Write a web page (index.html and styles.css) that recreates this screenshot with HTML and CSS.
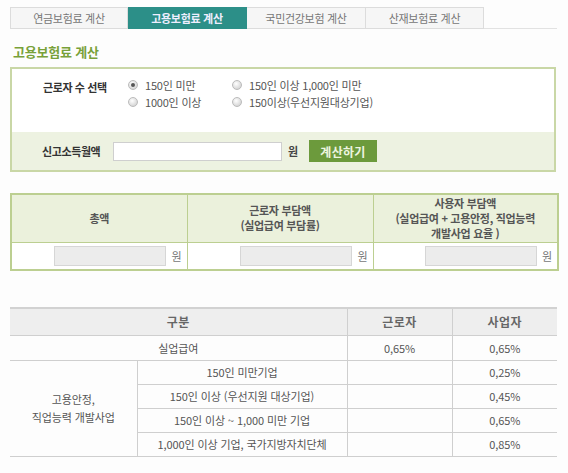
FILE: index.html
```html
<!DOCTYPE html>
<html lang="ko">
<head>
<meta charset="utf-8">
<title>고용보험료 계산</title>
<link rel="stylesheet" href="styles.css">
</head>
<body>
<div class="page">
  <ul class="tabs">
    <li class="tab">연금보험료 계산</li>
    <li class="tab active">고용보험료 계산</li>
    <li class="tab">국민건강보험 계산</li>
    <li class="tab">산재보험료 계산</li>
  </ul>

  <h2 class="title">고용보험료 계산</h2>

  <div class="calc">
    <div class="calc-top">
      <div class="calc-label">근로자 수 선택</div>
      <div class="radios">
        <label class="radio"><span class="dot checked"></span>150인 미만</label>
        <label class="radio"><span class="dot"></span>150인 이상 1,000인 미만</label>
        <label class="radio"><span class="dot"></span>1000인 이상</label>
        <label class="radio"><span class="dot"></span>150이상(우선지원대상기업)</label>
      </div>
    </div>
    <div class="calc-band">
      <span class="band-label">신고소득월액</span>
      <span class="field"></span>
      <span class="unit">원</span>
      <button class="btn" type="button">계산하기</button>
    </div>
  </div>

  <table class="result">
    <colgroup>
      <col class="c1"><col class="c2"><col class="c3">
    </colgroup>
    <thead>
      <tr>
        <th>총액</th>
        <th>근로자 부담액<br>(실업급여 부담률)</th>
        <th>사용자 부담액<br>(실업급여 + 고용안정, 직업능력<br>개발사업 요율 )</th>
      </tr>
    </thead>
    <tbody>
      <tr>
        <td><span class="out"></span><span class="won">원</span></td>
        <td><span class="out"></span><span class="won">원</span></td>
        <td><span class="out"></span><span class="won">원</span></td>
      </tr>
    </tbody>
  </table>

  <table class="rates">
    <colgroup>
      <col class="r1"><col class="r2"><col class="r3"><col class="r4">
    </colgroup>
    <thead>
      <tr>
        <th colspan="2">구분</th>
        <th class="vline">근로자</th>
        <th class="vline">사업자</th>
      </tr>
    </thead>
    <tbody>
      <tr class="tall">
        <td colspan="2">실업급여</td>
        <td class="vline">0,65%</td>
        <td class="vline">0,65%</td>
      </tr>
      <tr>
        <td rowspan="4" class="group">고용안정,<br>직업능력 개발사업</td>
        <td class="vline">150인 미만기업</td>
        <td class="vline"></td>
        <td class="vline">0,25%</td>
      </tr>
      <tr>
        <td class="vline">150인 이상 (우선지원 대상기업)</td>
        <td class="vline"></td>
        <td class="vline">0,45%</td>
      </tr>
      <tr>
        <td class="vline">150인 이상 ~ 1,000 미만 기업</td>
        <td class="vline"></td>
        <td class="vline">0,65%</td>
      </tr>
      <tr>
        <td class="vline">1,000인 이상 기업, 국가지방자치단체</td>
        <td class="vline"></td>
        <td class="vline">0,85%</td>
      </tr>
    </tbody>
  </table>
</div>
</body>
</html>
```

FILE: styles.css
```css
* { box-sizing: border-box; }

html, body {
  margin: 0;
  padding: 0;
  background: #fdfdfd;
}

body {
  font-family: "Noto Sans CJK KR", "Noto Sans", sans-serif;
  font-size: 11px;
  color: #555;
}

.page {
  width: 557px;
  padding-left: 10px;
  padding-top: 7px;
}

/* tabs */
.tabs {
  list-style: none;
  margin: 0;
  padding: 0;
  display: flex;
  height: 22px;
  border-bottom: 1px solid #e2e2e2;
}

.tab {
  height: 22px;
  line-height: 20px;
  text-align: center;
  background: #f6f6f6;
  border: 1px solid #dcdcdc;
  border-left: none;
  color: #777;
  font-size: 11px;
  letter-spacing: -0.3px;
}
.tab:nth-child(1) { width: 118px; border-left: 1px solid #dcdcdc; }
.tab:nth-child(2) { width: 119px; }
.tab:nth-child(3) { width: 119px; }
.tab:nth-child(4) { width: 118px; }

.tab.active {
  background: #2c8f88;
  border-color: #2c8f88;
  color: #eef;
  font-weight: bold;
}

/* title */
.title {
  margin: 13px 0 6px 3px;
  font-size: 13px;
  line-height: 19px;
  font-weight: bold;
  color: #78a139;
  letter-spacing: -0.2px;
}

/* calculator box */
.calc {
  width: 546px;
  border: 2px solid #c9d7a6;
  background: #fff;
}

.calc-top {
  height: 63px;
  display: flex;
  padding: 7px 0 0 31px;
}

.calc-label {
  width: 85px;
  padding-top: 3px;
  font-weight: bold;
  color: #333;
  line-height: 17px;
  letter-spacing: -0.4px;
}

.radios {
  display: grid;
  grid-template-columns: 104px auto;
  grid-auto-rows: 17px;
}

.radio {
  display: flex;
  align-items: center;
  gap: 7px;
  color: #555;
  font-size: 11px;
  letter-spacing: -0.2px;
}

.dot {
  width: 10px;
  height: 10px;
  border-radius: 50%;
  border: 1px solid #bbb;
  background: radial-gradient(circle at 40% 35%, #fff 0, #e6e6e6 45%, #c9c9c9 100%);
  position: relative;
  flex: none;
}
.dot.checked::after {
  content: "";
  position: absolute;
  left: 2px;
  top: 2px;
  width: 4px;
  height: 4px;
  border-radius: 50%;
  background: #555;
}

.calc-band {
  height: 38px;
  background: #edf2e1;
  display: flex;
  align-items: center;
  padding-left: 30px;
}

.band-label {
  width: 71px;
  font-weight: bold;
  color: #333;
  letter-spacing: -0.4px;
}

.field {
  width: 169px;
  height: 19px;
  background: #fff;
  border: 1px solid #cfcfcf;
}

.unit {
  margin-left: 6px;
  width: 21px;
  color: #444;
  font-weight: bold;
}

.btn {
  width: 68px;
  height: 22px;
  padding: 0;
  border: none;
  background: #6c9a3c;
  color: #eef5e0;
  font-family: inherit;
  font-size: 12px;
  font-weight: bold;
  letter-spacing: 0.3px;
}

/* result table */
.result {
  margin-top: 21px;
  width: 547px;
  border-collapse: collapse;
  border: 2px solid #bccf91;
  table-layout: fixed;
}
.result .c1 { width: 176px; }
.result .c2 { width: 186px; }
.result .c3 { width: 185px; }

.result th {
  height: 48px;
  background: #ebf1dc;
  border: 1px solid #bccf91;
  font-size: 11px;
  line-height: 15px;
  font-weight: bold;
  color: #555;
  padding: 0;
  letter-spacing: -0.3px;
}

.result td {
  height: 28px;
  border: 1px solid #bccf91;
  background: #fff;
  text-align: right;
  padding: 0 5px 0 0;
}

.result td .out {
  display: inline-block;
  vertical-align: middle;
  width: 112px;
  height: 20px;
  background: #ececec;
  border: 1px solid #d6d6d6;
}
.result td .won {
  display: inline-block;
  vertical-align: middle;
  margin-left: 5px;
  color: #777;
}

/* rates table */
.rates {
  margin-top: 36px;
  width: 547px;
  border-collapse: collapse;
  table-layout: fixed;
  border-top: 2px solid #d2d2d2;
  border-bottom: 1px solid #cfcfcf;
}
.rates .r1 { width: 127px; }
.rates .r2 { width: 210px; }
.rates .r3 { width: 105px; }
.rates .r4 { width: 105px; }

.rates th {
  height: 27px;
  background: #eeeeee;
  font-size: 12px;
  font-weight: bold;
  color: #666;
  border-bottom: 1px solid #cfcfcf;
  padding: 0;
  letter-spacing: 0.5px;
}

.rates td {
  height: 24px;
  text-align: center;
  color: #555;
  font-size: 11px;
  border-bottom: 1px solid #cfcfcf;
  padding: 0;
  letter-spacing: -0.1px;
}

.rates tr.tall td { height: 25px; }

.rates .vline { border-left: 1px solid #cfcfcf; }

.rates td.group {
  line-height: 18px;
}
```
